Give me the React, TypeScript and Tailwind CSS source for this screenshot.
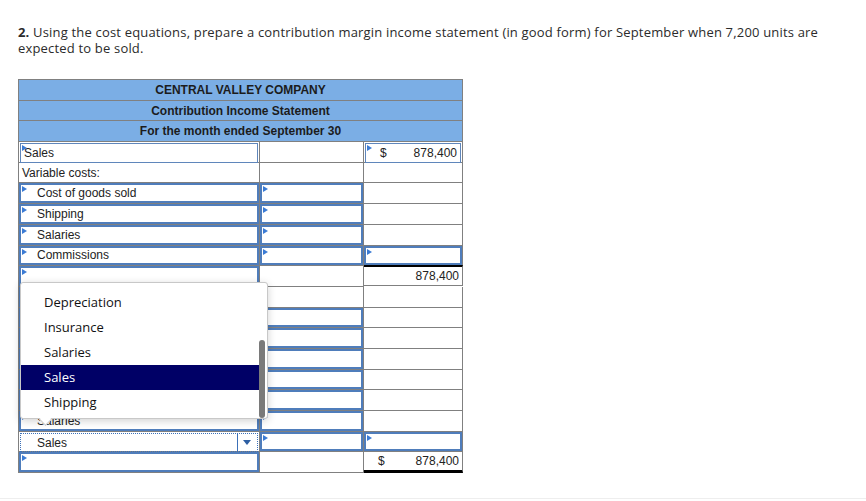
import React from 'react';

type Kind = 'plain' | 'input' | 'thin' | 'select';

type CellSpec = {
    kind?: Kind;
    text?: string;
    indent?: boolean;
    marker?: boolean;
    dollar?: boolean;
    right?: boolean;
    topBlack?: boolean;
    bottomBlack?: boolean;
};

const widths = ['w-[241px]', 'w-[104px]', 'w-[99px]'];

const rows: CellSpec[][] = [
    [{ kind: 'thin', text: 'Sales', marker: true }, {}, { kind: 'thin', marker: true, dollar: true, text: '878,400' }],
    [{ text: 'Variable costs:' }, {}, {}],
    [{ kind: 'input', text: 'Cost of goods sold', indent: true, marker: true }, { kind: 'input', marker: true }, {}],
    [{ kind: 'input', text: 'Shipping', indent: true, marker: true }, { kind: 'input', marker: true }, {}],
    [{ kind: 'input', text: 'Salaries', indent: true, marker: true }, { kind: 'input', marker: true }, {}],
    [{ kind: 'input', text: 'Commissions', indent: true, marker: true }, { kind: 'input', marker: true }, { kind: 'input', marker: true }],
    [{ kind: 'input', marker: true }, {}, { text: '878,400', right: true, topBlack: true }],
    [{ kind: 'input', marker: true }, {}, {}],
    [{ kind: 'input', marker: true }, { kind: 'input', marker: true }, {}],
    [{ kind: 'input', marker: true }, { kind: 'input', marker: true }, {}],
    [{ kind: 'input', marker: true }, { kind: 'input', marker: true }, {}],
    [{ kind: 'input', marker: true }, { kind: 'input', marker: true }, {}],
    [{ kind: 'input', marker: true }, { kind: 'input', marker: true }, {}],
    [{ kind: 'input', text: 'Salaries', indent: true, marker: true }, { kind: 'input', marker: true }, {}],
    [{ kind: 'select', text: 'Sales', indent: true }, { kind: 'input', marker: true }, { kind: 'input', marker: true }],
    [{ kind: 'input', marker: true }, {}, { dollar: true, text: '878,400', bottomBlack: true }],
];

function Marker() {
    return <span className="absolute left-[1px] top-[1px] w-0 h-0 border-l-[5px] border-l-[#3b7bd4] border-y-[3px] border-y-transparent" />;
}

function Cell({ spec, i }: { spec: CellSpec; i: number }) {
    const kind = spec.kind ?? 'plain';
    const box =
        kind === 'input'
            ? 'border-2 border-[#4f7dbb]'
            : kind === 'thin'
              ? 'border border-[#5f86bb] m-[1px]'
              : kind === 'select'
                ? 'border border-dotted border-[#3b70b8] m-[1px]'
                : '';
    return (
        <div
            className={`relative ${widths[i]} shrink-0 h-full border-r border-b border-[#808080] ${spec.topBlack ? 'border-t-2 border-t-black -mt-[1px]' : ''} ${spec.bottomBlack ? 'border-b-[3px] border-b-black' : ''}`}
        >
            <div className={`relative h-full flex items-center ${box} ${spec.indent ? 'pl-[16px]' : 'pl-[3px]'} pr-[3px]`}>
                {spec.marker && <Marker />}
                {spec.dollar && <span className="pl-[11px]">$</span>}
                {spec.text && (
                    <span className={spec.dollar || spec.right ? 'ml-auto' : ''}>{spec.text}</span>
                )}
                {kind === 'select' && (
                    <div className="ml-auto h-full flex items-center border-l border-[#3b70b8] pl-[5px] pr-[3px]">
                        <span className="w-0 h-0 border-t-[5px] border-t-[#2d5fa3] border-x-[4px] border-x-transparent" />
                    </div>
                )}
            </div>
        </div>
    );
}

export default function App() {
    const items = ['Depreciation', 'Insurance', 'Salaries', 'Sales', 'Shipping'];
    return (
        <div className="relative w-[866px] h-[501px] bg-white overflow-hidden">
            <div className="pl-[18px] pt-[24px] w-[840px] text-[13px] leading-[16px] tracking-[0.18px] text-[#2b2b2b]" style={{ fontFamily: '"Open Sans", Lato, sans-serif' }}>
                <p>
                    <span className="font-bold">2.</span> Using the cost equations, prepare a contribution margin income statement (in good form) for September when 7,200 units are expected to be sold.
                </p>
            </div>

            <div className="ml-[18px] mt-[23px] w-[445px] border-l border-t border-[#808080] text-[12px] text-[#222]" style={{ fontFamily: '"Liberation Sans", Arial, sans-serif' }}>
                {['CENTRAL VALLEY COMPANY', 'Contribution Income Statement', 'For the month ended September 30'].map((h) => (
                    <div key={h} className="h-[20.7px] flex items-center justify-center bg-[#7baee5] border-r border-b border-[#808080] font-bold text-[#1c1c1c]">
                        {h}
                    </div>
                ))}
                {rows.map((r, ri) => (
                    <div key={ri} className="flex h-[20.7px]">
                        {r.map((c, ci) => (
                            <Cell key={ci} spec={c} i={ci} />
                        ))}
                    </div>
                ))}
            </div>

            {/* open select list */}
            <div className="absolute left-[20px] top-[282px] w-[248px] h-[137px] bg-white border border-[#c8c8c8] rounded-[3px] shadow-[0_2px_8px_rgba(0,0,0,0.18)] pt-[7px] text-[13px] text-[#111]" style={{ fontFamily: '"Open Sans", "Noto Sans", sans-serif' }}>
                {items.map((it) => (
                    <div key={it} className={`h-[25px] w-[239px] flex items-center pl-[23px] ${it === 'Sales' ? 'bg-[#000066] text-white' : ''}`}>
                        {it}
                    </div>
                ))}
                <div className="absolute right-[2px] top-[57px] w-[6px] h-[78px] rounded-full bg-[#7a7a7a]" />
                <span className="absolute left-[20px] -bottom-[6px] w-[9px] h-[9px] bg-white border-r border-b border-[#c8c8c8] rotate-45" />
            </div>

            <div className="absolute left-0 right-0 bottom-[2px] border-t border-[#eeeeee]" />
        </div>
    );
}
